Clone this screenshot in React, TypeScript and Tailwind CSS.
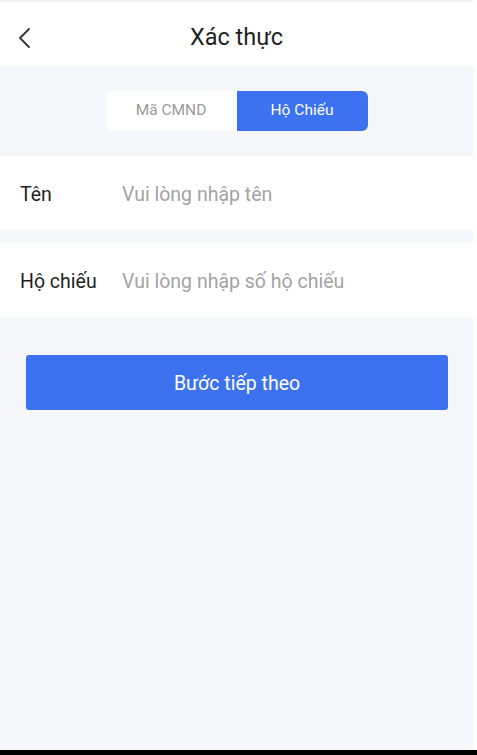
import React, { useState } from 'react';

const App = () => {
  const [tab, setTab] = useState<'cmnd' | 'passport'>('passport');
  return <div className="w-[477px] h-[755px] bg-white font-['Roboto','Liberation_Sans',sans-serif] overflow-hidden">
      <div className="w-[473px] h-[750px] flex flex-col bg-[#f5f7fa]">
        <div className="h-[2px] bg-[#f1f2f4]" />
        {/* Header */}
        <div className="h-[64px] bg-white flex items-center relative">
          <button className="absolute left-[13px] top-[21px] p-1">
            <svg width="14" height="22" viewBox="0 0 14 22" fill="none">
              <path d="M12 2 L3 11 L12 20" stroke="#333" strokeWidth="1.8" strokeLinecap="round" strokeLinejoin="round" />
            </svg>
          </button>
          <h1 className="w-full text-center text-[23.5px] text-[#1f1f1f] leading-none pt-[8px]">Xác thực</h1>
        </div>
        {/* Tabs */}
        <div className="h-[90px] flex items-center justify-center">
          <div className="flex w-[262px] h-[40px] rounded-[6px] overflow-hidden bg-white">
            <button onClick={() => setTab('cmnd')} className={tab === 'cmnd' ? 'w-[131px] bg-[#3c72f0] text-white text-[15.5px]' : 'w-[131px] bg-white text-[#9a9a9a] text-[15.5px]'}>
              Mã CMND
            </button>
            <button onClick={() => setTab('passport')} className={tab === 'passport' ? 'flex-1 bg-[#3c72f0] text-white text-[15.5px]' : 'flex-1 bg-white text-[#9a9a9a] text-[15.5px]'}>
              Hộ Chiếu
            </button>
          </div>
        </div>
        {/* Fields */}
        <div className="h-[74px] bg-white flex items-center pt-[4px]">
          <label className="w-[122px] pl-[20px] text-[19.5px] text-[#1f1f1f]">Tên</label>
          <input type="text" placeholder="Vui lòng nhập tên" className="flex-1 text-[19.5px] outline-none placeholder:text-[#a3a3a3] bg-transparent" />
        </div>
        <div className="h-[13px]" />
        <div className="h-[74px] bg-white flex items-center pt-[4px]">
          <label className="w-[122px] pl-[20px] text-[19.5px] text-[#1f1f1f]">Hộ chiếu</label>
          <input type="text" placeholder="Vui lòng nhập số hộ chiếu" className="flex-1 text-[19.5px] outline-none placeholder:text-[#a3a3a3] bg-transparent" />
        </div>
        <div className="px-[26px] pt-[38px]">
          <button className="w-[422px] h-[55px] bg-[#3c72f0] rounded-[3px] text-white text-[19.5px] pt-[2px]">
            Bước tiếp theo
          </button>
        </div>
      </div>
      <div className="h-[5px] w-[477px] bg-black" />
    </div>;
};

export default App;
